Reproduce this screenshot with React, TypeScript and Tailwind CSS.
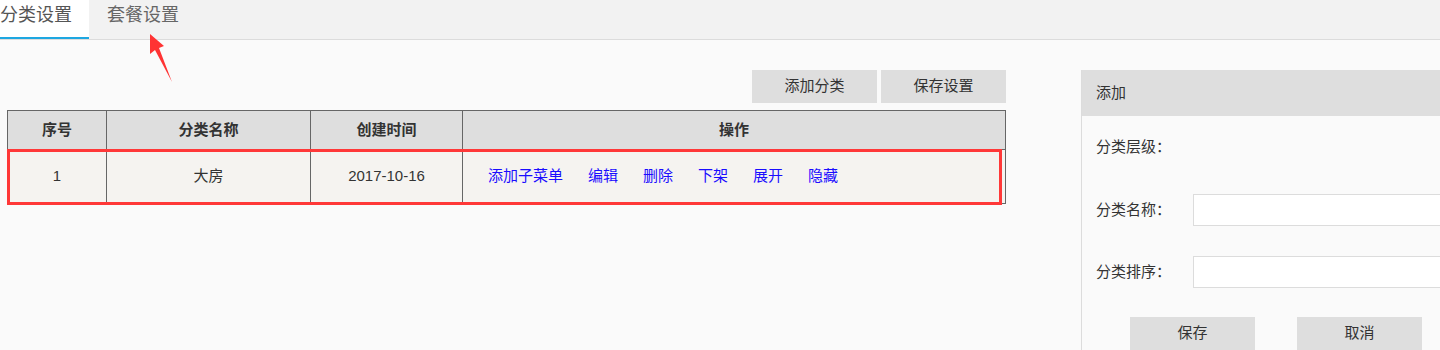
import React from 'react';

const font = { fontFamily: '"Liberation Sans", "Noto Sans CJK SC", sans-serif' };

const actions = ['添加子菜单', '编辑', '删除', '下架', '展开', '隐藏'];

export default function App() {
  return (
    <div className="relative w-[1440px] h-[350px] overflow-hidden bg-[#fafafa] text-[#333]" style={font}>
      {/* Tabs */}
      <div className="flex h-[40px] bg-[#f2f2f2] border-b border-[#dcdcdc]">
        <div className="w-[89px] h-[39px] bg-white border-b-2 border-[#1ea7e1] text-[18px] leading-[30px] text-[#555]">
          分类设置
        </div>
        <div className="h-[39px] pl-[18px] pr-[18px] text-[18px] leading-[30px] text-[#666]">套餐设置</div>
      </div>

      <div className="flex pt-[30px]">
        {/* Left: table */}
        <div className="w-[1006px] pl-[7px] shrink-0">
          <div className="flex justify-end gap-[4px] mb-[7px]">
            <button className="w-[125px] h-[33px] bg-[#dedede] text-[15px] text-[#333]">添加分类</button>
            <button className="w-[125px] h-[33px] bg-[#dedede] text-[15px] text-[#333]">保存设置</button>
          </div>
          <div className="relative border border-[#666]">
            <div className="flex h-[39px] bg-[#dedede] border-b border-[#666] font-bold text-[15px] text-[#333]">
              <div className="w-[99px] flex items-center justify-center border-r border-[#666]">序号</div>
              <div className="w-[204px] flex items-center justify-center border-r border-[#666]">分类名称</div>
              <div className="w-[152px] flex items-center justify-center border-r border-[#666]">创建时间</div>
              <div className="flex-1 flex items-center justify-center">操作</div>
            </div>
            <div className="flex h-[53px] bg-[#f5f3f0] text-[15px] text-[#333]">
              <div className="w-[99px] flex items-center justify-center border-r border-[#666]">1</div>
              <div className="w-[204px] flex items-center justify-center border-r border-[#666]">大房</div>
              <div className="w-[152px] flex items-center justify-center border-r border-[#666]">2017-10-16</div>
              <div className="flex-1 flex items-center pl-[25px] gap-[25px] text-[#1a0dff]">
                {actions.map((a) => (
                  <a key={a} className="cursor-pointer">{a}</a>
                ))}
              </div>
            </div>
            {/* highlight annotation */}
            <div className="absolute left-[-1px] top-[38px] w-[995px] h-[56px] border-[3px] border-[#ff3838] pointer-events-none" />
          </div>
        </div>

        {/* Right: add panel */}
        <div className="ml-[75px] w-[420px] shrink-0 border-l border-[#dcdcdc] h-[300px]">
          <div className="h-[46px] bg-[#dedede] flex items-center pl-[14px] text-[15px] text-[#333]">添加</div>
          <div className="pl-[14px] text-[15px] text-[#333]">
            <div className="h-[31px] mt-[16px] flex items-center">分类层级：</div>
            <div className="flex items-center mt-[31px]">
              <span className="w-[97px] shrink-0">分类名称：</span>
              <input className="w-[320px] h-[32px] bg-white border border-[#dcdcdc] outline-none" />
            </div>
            <div className="flex items-center mt-[30px]">
              <span className="w-[97px] shrink-0">分类排序：</span>
              <input className="w-[320px] h-[32px] bg-white border border-[#dcdcdc] outline-none" />
            </div>
            <div className="flex gap-[42px] mt-[29px] pl-[34px]">
              <button className="w-[125px] h-[33px] bg-[#dedede] text-[15px] text-[#333]">保存</button>
              <button className="w-[125px] h-[33px] bg-[#dedede] text-[15px] text-[#333]">取消</button>
            </div>
          </div>
        </div>
      </div>

      {/* red arrow annotation */}
      <svg className="absolute left-0 top-0 pointer-events-none" width="200" height="100" viewBox="0 0 200 100">
        <polygon points="150,34 164,46 159,48 172,82 155,50 150,54" fill="#ff3333" />
      </svg>
    </div>
  );
}
